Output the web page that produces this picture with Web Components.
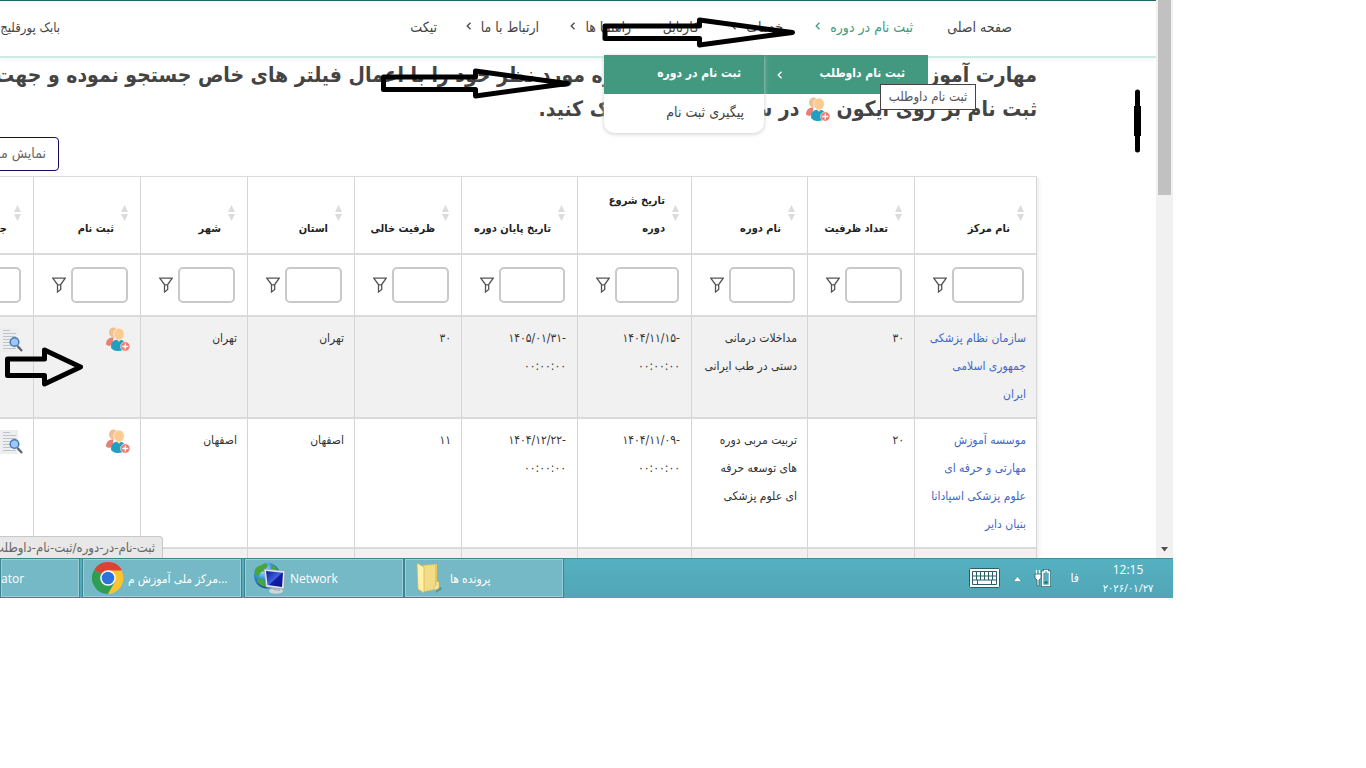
<!DOCTYPE html>
<html lang="fa">
<head>
<meta charset="utf-8">
<title>ثبت نام در دوره</title>
<style>
  html, body { height: 100%; margin: 0; }
  body { background: #fff; font-family: "DejaVu Sans Condensed", "DejaVu Sans", sans-serif; }
</style>
</head>
<body>
<desk-screen>
  <site-page slot="page"></site-page>
  <scroll-track slot="scroll"></scroll-track>
  <status-bubble slot="over">ثبت-نام-در-دوره/ثبت-نام-داوطلب</status-bubble>
  <task-bar slot="bar"></task-bar>
  <pen-marks slot="over"></pen-marks>
</desk-screen>
<script>
const define = (name, html, setup) => customElements.define(name, class extends HTMLElement {
  constructor() {
    super();
    const t = document.createElement('template');
    t.innerHTML = html;
    this.attachShadow({ mode: 'open' }).append(t.content.cloneNode(true));
    if (setup) setup(this);
  }
});

/* ---------- icons ---------- */
define('people-icon', `
<style>:host{display:inline-block;width:24px;height:25px}svg{display:block;width:100%;height:100%}</style>
<svg viewBox="0 0 24 25" aria-hidden="true">
  <ellipse cx="7.5" cy="5.500" rx="4.500" ry="5" fill="#f0bf94"/>
  <path d="M0 16.500C.5 12 4 10 7.500 10.500l-1 7-3 1.500C1 18.500 0 18 0 16.500z" fill="#e87f74"/>
  <path d="M5 20c0-5 3-7.500 7.500-7.500S20 15 20 20c-2 3-5 4-8 4s-7-1.500-7-4z" fill="#229fc0"/>
  <path d="M10 11.500h6l-3 3.500z" fill="#fccb92"/>
  <ellipse cx="13" cy="7" rx="5.300" ry="6" fill="#fccb92" stroke="#fff" stroke-width=".6"/>
  <circle cx="19.300" cy="19.500" r="4.700" fill="#e9796f" stroke="#fff" stroke-width=".6"/>
  <path d="M19.300 16.500v6M16.300 19.500h6" stroke="#fff" stroke-width="1.300"/>
</svg>`);

define('detail-icon', `
<style>:host{display:inline-block;width:24px;height:26px}svg{display:block;width:100%;height:100%}</style>
<svg viewBox="0 0 24 26" aria-hidden="true">
  <path d="M0 1h19v24H0z" fill="#eceef0"/>
  <path d="M4 3.500h7M4 6.500h13M4 9.500h13M4 12.500h9M4 15.500h7M4 18.500h8M4 21.500h13" stroke="#bfc4c9"/>
  <path d="M18.500 19l4.500 5" stroke="#59616b" stroke-width="2.200"/>
  <circle cx="15.500" cy="15" r="4.300" fill="#9cc8fb" stroke="#4a78b0" stroke-width="1.500"/>
</svg>`);

define('funnel-icon', `
<style>:host{display:block;width:14px;height:16px}svg{display:block}</style>
<svg width="14" height="16" viewBox="0 0 14 16" fill="none" stroke="#555" stroke-width="1.300" aria-hidden="true">
  <path d="M.8 1.200h12.400L8.700 7.500v5L5.500 15V7.500zM5.500 7.800h3.200"/>
</svg>`);

define('sort-mark', `
<style>:host{display:block;width:7px;height:16px}svg{display:block}</style>
<svg width="7" height="16" viewBox="0 0 7 16" fill="#dcdcdc" aria-hidden="true"><path d="M3.500 0L7 7H0zM0 9h7l-3.500 7z"/></svg>`);

define('chevron-mark', `
<style>:host{display:inline-block;width:6px;height:8px}svg{display:block}</style>
<svg width="6" height="8" viewBox="0 0 6 8" fill="none" stroke="currentColor" stroke-width="1.300" aria-hidden="true"><path d="M4.500 .8L1.200 4l3.300 3.200"/></svg>`);

/* ---------- navigation ---------- */
define('nav-item', `
<style>
  :host{display:block;font-size:14px;line-height:24px;color:#444}
  :host([active]){color:#3f9a7e}
  a{color:inherit;text-decoration:none;display:inline-flex;gap:9px;white-space:nowrap}
  chevron-mark{display:none;margin-top:7px}
  :host([more]) chevron-mark{display:block}
</style>
<a href="#"><slot></slot><chevron-mark></chevron-mark></a>`);

define('site-nav', `
<style>
  :host{display:block;position:relative;z-index:2;border-top:1px solid #1c6864;border-bottom:2px solid #cdeae4;background:#fff;box-shadow:0 2px 4px #eef8f6}
  nav{display:grid;grid-template-columns:99px 130px 84px 68px 92px 102px 377px 200px;box-sizing:border-box;height:55px;padding:14px 144px 0 0}
  .user{font-size:13px;line-height:26px}
</style>
<nav>
  <nav-item>صفحه اصلی</nav-item>
  <nav-item more active>ثبت نام در دوره</nav-item>
  <nav-item more>خدمات</nav-item>
  <nav-item>کارتابل</nav-item>
  <nav-item more>راهنما ها</nav-item>
  <nav-item more>ارتباط با ما</nav-item>
  <nav-item>تیکت</nav-item>
  <nav-item class="user">بابک پورقلیج</nav-item>
</nav>
<slot></slot>`);

define('drop-menu', `
<style>
  :host{position:absolute;z-index:3;top:54px;right:228px;display:flex;align-items:flex-start;font-size:12px;line-height:20px}
  a{display:flex;box-sizing:border-box;height:39px;padding-top:8px;text-decoration:none;white-space:nowrap}
  .top{width:164px;padding-right:23px;background:#43997f;color:#fff;font-weight:bold}
  .top chevron-mark{margin:8px auto 0 13px}
  .panel{width:160px;border-radius:0 0 10px 10px;background:#fff;box-shadow:0 1px 4px #ccc}
  .on{padding-right:23px;background:#43997f;color:#fff;font-weight:bold}
  .off{padding-right:20px;color:#444;font-size:14px}
  .tip{position:absolute;top:29px;right:-48px;box-sizing:border-box;width:96px;height:26px;border:1px solid #444;background:#fff;color:#555;font-size:13px;line-height:24px;text-align:center;white-space:nowrap}
</style>
<a class="top" href="#">ثبت نام داوطلب<chevron-mark></chevron-mark></a>
<div class="panel"><a class="on" href="#">ثبت نام در دوره</a><a class="off" href="#">پیگیری ثبت نام</a></div>
<div class="tip" role="tooltip">ثبت نام داوطلب</div>`);

/* ---------- course table ---------- */
define('filter-box', `
<style>
  :host{display:flex;align-items:center;gap:5px;padding:12px 12px 12px 18px}
  input{flex:1;min-width:0;box-sizing:border-box;height:36px;padding:0 6px;border:2px solid #c9c9c9;border-radius:5px;background:#fff;font:inherit}
</style>
<input type="text"><funnel-icon></funnel-icon>`, host => {
  host.shadowRoot.querySelector('input').setAttribute('aria-label', host.getAttribute('label') || 'فیلتر');
});

define('course-table', `
<style>
  :host{display:block;font-size:12px;line-height:28px;color:#333}
  table{table-layout:fixed;width:1111px;border-collapse:separate;border-spacing:0;border-right:1px solid #d3d5d7;box-shadow:2px 2px 4px #eee}
  th,td{box-sizing:border-box;padding:0;border-left:1px solid #d3d5d7;border-bottom:2px solid #d8dadb;text-align:right;vertical-align:top}
  .names th{border-top:1px solid #dadcdd;vertical-align:bottom;color:#222;font-size:11px;white-space:nowrap}
  .h{display:flex;align-items:flex-end;gap:7px;padding:10px 12px 10px 6px}
  .h sort-mark{margin-bottom:22px}
  tbody td{padding:7px 10px 9px 6px}
  tbody tr:nth-child(odd){background:#f1f1f1}
  tbody a{color:#4468c8;text-decoration:none}
  tbody a.pic{display:block;height:25px;margin-top:3px;line-height:0}
</style>
<table><colgroup></colgroup><thead><tr class="names"></tr><tr class="filters"></tr></thead><tbody></tbody></table>`, host => {
  const root = host.shadowRoot;
  const columns = [
    ['نام مرکز', 122], ['تعداد ظرفیت', 107], ['نام دوره', 116], ['تاریخ شروع<br>دوره', 114], ['تاریخ پایان دوره', 116],
    ['ظرفیت خالی', 107], ['استان', 107], ['شهر', 107], ['ثبت نام', 107], ['جزئیات', 107]
  ];
  const rows = [
    ['سازمان نظام پزشکی<br>جمهوری اسلامی<br>ایران', '۳۰', 'مداخلات درمانی<br>دستی در طب ایرانی', '۱۴۰۴/۱۱/۱۵-', '۱۴۰۵/۰۱/۳۱-', '۳۰', 'تهران', 'تهران'],
    ['موسسه آموزش<br>مهارتی و حرفه ای<br>علوم پزشکی اسپادانا<br>بنیان دایر', '۲۰', 'تربیت مربی دوره<br>های توسعه حرفه<br>ای علوم پزشکی', '۱۴۰۴/۱۱/۰۹-', '۱۴۰۴/۱۲/۲۲-', '۱۱', 'اصفهان', 'اصفهان']
  ];
  const cell = (v, i) => i === 0 ? `<td><a href="#">${v}</a></td>`
    : i === 3 || i === 4 ? `<td dir="ltr">${v}<br>۰۰:۰۰:۰۰</td>` : `<td>${v}</td>`;
  root.querySelector('colgroup').innerHTML = columns.map(c => `<col style="width:${c[1]}px">`).join('');
  root.querySelector('.names').innerHTML = columns.map(c => `<th scope="col"><div class="h"><sort-mark></sort-mark><span>${c[0]}</span></div></th>`).join('');
  root.querySelector('.filters').innerHTML = columns.map(c => `<td><filter-box label="${c[0].replace('<br>', ' ')}"></filter-box></td>`).join('');
  root.querySelector('tbody').innerHTML = rows.map(r => '<tr>' + r.map(cell).join('')
    + '<td><a class="pic" href="#" aria-label="ثبت نام"><people-icon></people-icon></a></td>'
    + '<td><a class="pic" href="#" aria-label="جزئیات"><detail-icon></detail-icon></a></td></tr>').join('')
    + '<tr>' + '<td>&nbsp;</td>'.repeat(10) + '</tr>';
});

define('site-page', `
<style>
  :host{display:block;direction:rtl}
  main{display:block;padding-right:119px}
  h1{margin:0;font-size:21px;line-height:34px;font-weight:bold;color:#444;white-space:nowrap}
  h1 .line{display:block}
  h1 people-icon{vertical-align:-6px}
  .lead{display:inline-block;width:402px}
  button{display:block;box-sizing:border-box;width:140px;height:34px;margin:11px 978px 5px 0;padding:0 12px 2px;border:1px solid #1b0a63;border-radius:4px;background:#fff;color:#666;font:inherit;font-size:14px;text-align:right;white-space:nowrap}
</style>
<site-nav><drop-menu></drop-menu></site-nav>
<main>
  <h1><span class="line"><span class="lead">مهارت آموز محترم می توانید</span>دوره مورد نظر خود را با اعمال فیلتر های خاص جستجو نموده و جهت</span>
  <span class="line">ثبت نام بر روی آیکون <people-icon></people-icon> در ستون ثبت نام کلیک کنید.</span></h1>
  <button type="button">نمایش موارد</button>
  <course-table></course-table>
</main>`);

define('scroll-track', `
<style>
  :host{display:flex;flex-direction:column;justify-content:space-between;align-items:center;width:17px;height:100%;background:#f1f1f1}
  .thumb{width:13px;height:35%;background:#c1c1c1}
  svg{margin-bottom:6px}
</style>
<div class="thumb"></div>
<svg width="7" height="5" viewBox="0 0 7 5" fill="#505050" aria-hidden="true"><path d="M0 0h7L3.500 4.500z"/></svg>`);

define('status-bubble', `
<style>
  :host{position:absolute;left:0;bottom:40px;z-index:4;display:flex;direction:rtl;box-sizing:border-box;width:163px;height:22px;padding-right:7px;overflow:hidden;border:1px solid #c8c8c8;border-width:1px 1px 0 0;border-radius:0 4px 0 0;background:#e8e8e8;color:#666;font-size:13px;line-height:21px;white-space:nowrap}
</style><slot></slot>`);

/* ---------- taskbar ---------- */
define('task-button', `
<style>
  :host{display:block;width:160px;box-sizing:border-box}
  button{display:flex;align-items:center;gap:4px;width:100%;height:40px;padding:0 9px;border:1px solid #3d8491;box-shadow:inset 0 0 0 1px #9bd0d9;background:#74b9c5;color:#fff;font:12px "Open Sans","DejaVu Sans Condensed","DejaVu Sans",sans-serif;white-space:nowrap}
  :host(.first) button{padding:0}
</style>
<button type="button"><slot name="icon"></slot><slot></slot></button>`);

define('task-bar', `
<style>
  :host{display:flex;align-items:stretch;height:40px;overflow:hidden;background:linear-gradient(#55b1c1,#50a6b6);box-shadow:inset 0 1px #418d98;color:#fff;font:12px/18px "Open Sans","DejaVu Sans Condensed","DejaVu Sans",sans-serif}
  .first{width:80px;margin-right:2px}
  .chrome{margin-right:2px}
  .tray{display:flex;align-items:center;margin-left:auto;padding-right:18px}
  .time{display:flex;flex-direction:column;align-items:center;width:54px;margin-left:22px;padding-top:2px;white-space:nowrap}
  .cal{direction:rtl;font-size:11px}
  .up{margin:0 12px 0 13px}
  .lang{margin-left:20px}
</style>
<task-button class="first">ator</task-button>
<task-button class="chrome"><svg slot="icon" width="32" height="32" viewBox="0 0 32 32">
  <path d="M16 16L2.140 8A16 16 0 0 1 29.860 8z" fill="#dd4131"/>
  <path d="M16 16L2.140 8A16 16 0 0 0 16 32z" fill="#2f9e52"/>
  <path d="M22.900 20L16 32 12 26l4-10z" fill="#2f9e52"/>
  <path d="M16 8.500h13.600A16 16 0 0 1 16 32l7-12z" fill="#fbc32d"/>
  <circle cx="16" cy="16" r="7.800" fill="#fff"/><circle cx="16" cy="16" r="6.300" fill="#2c72dc"/>
</svg><span dir="ltr">مرکز ملی آموزش م...</span></task-button>
<task-button><svg slot="icon" width="32" height="32" viewBox="0 0 32 32">
  <defs><radialGradient id="g" cx=".35" cy=".25" r=".8"><stop offset="0" stop-color="#b9ecff"/><stop offset=".5" stop-color="#2f8ed8"/><stop offset="1" stop-color="#123f91"/></radialGradient>
  <linearGradient id="s" x2="1" y2="1"><stop offset="0" stop-color="#0a1a9c"/><stop offset=".5" stop-color="#4263dc"/><stop offset=".55" stop-color="#101fa8"/><stop offset="1" stop-color="#0a138b"/></linearGradient></defs>
  <circle cx="13" cy="13.500" r="13" fill="url(#g)"/>
  <path d="M3 5l8-4 3 2-3 6-4 1-3 5-3-2C0 9 1 7 3 5zM17 2l6 4-2 4-4-3zM4 16l6 2 2 7-4-1-5-4z" fill="#49a53b"/>
  <ellipse cx="22" cy="29" rx="7" ry="2.800" fill="#d3d6d9"/><path d="M19 22l7 1v6l-7-1z" fill="#aeb4ba"/>
  <path d="M10 7l21 2-1 18-18-2z" fill="#e3e8ee" stroke="#8d99a8" stroke-width=".6"/><path d="M12 9l17 1.700-1 14.300-14.500-2z" fill="url(#s)"/>
</svg>Network</task-button>
<task-button><svg slot="icon" width="32" height="32" viewBox="0 0 32 32">
  <path d="M22 28l5-3 1 2-6 4z" fill="#3c7480" opacity=".5"/>
  <path d="M9 3l14-1v25l-14 3z" fill="#e9c75e"/><path d="M10 4l11-1v24l-11 2z" fill="#f3dc88"/>
  <path d="M3 1l7 4v26l-6-4z" fill="#fff0aa" stroke="#d5b24e" stroke-width=".7"/><path d="M22 19l3 1v6l-3 2-2-1v-3l2-1z" fill="#f7e59b" stroke="#cfae50" stroke-width=".6"/>
</svg><span>پرونده ها</span></task-button>
<div class="tray">
  <svg width="31" height="20" viewBox="0 0 31 20"><rect x=".5" y=".5" width="30" height="19" rx="1" fill="#fff" stroke="#2c5e68"/><path d="M3.500 3.500h24v13h-24zM3.500 8h24M3.500 12h24M7.500 3.500V12M11.500 3.500V12M15.500 3.500V12M19.500 3.500V12M23.500 3.500V12M8.500 12v4M22.500 12v4" fill="none" stroke="#2c5e68"/></svg>
  <svg class="up" width="9" height="7" viewBox="0 0 9 7"><path d="M.5 6.500h8L4.500 1.500z" fill="#fff" stroke="#3f7a85" stroke-width=".5"/></svg>
  <svg width="17" height="18" viewBox="0 0 17 18"><path d="M8.500 3h2V1h3v2h2v13.500h-7z" fill="#54aebd" stroke="#2c5e68" stroke-width="3"/><path d="M8.500 3h2V1.500h3V3h2v13.500h-7z" fill="#54aebd" stroke="#fff" stroke-width="1.500"/><path d="M10.500 13.500h3" stroke="#2c5e68" stroke-width="2"/><path d="M2.500 1v4M5.500 1v4" stroke="#fff" stroke-width="1.300"/><path d="M1 5h6v4L5 11v6H3v-6L1 9z" fill="#fff" stroke="#2c5e68" stroke-width=".8"/></svg>
  <span class="lang">فا</span>
  <div class="time"><span>12:15</span><span class="cal">۲۰۲۶/۰۱/۲۷</span></div>
</div>`);

/* ---------- freehand annotations ---------- */
define('pen-marks', `
<style>:host{position:absolute;inset:0;z-index:5;pointer-events:none}svg{position:absolute;top:0;right:0}</style>
<svg width="1173" height="598" viewBox="0 0 1173 598" fill="none" stroke="#000" stroke-width="5" stroke-linejoin="round" aria-hidden="true">
  <path d="M605 26H699.500V20L792.500 32.500 699.500 45V38.500H605z"/>
  <path d="M383.500 77H475.500V71L567.500 83.500 475.500 96V89.500H383.500z"/>
  <path d="M7.500 359H44.500V350L80.500 367 44.500 384V375.500H7.500z"/>
  <path d="M1137.500 92v58" stroke-linecap="round"/><path d="M1137.500 106v30" stroke-width="7"/>
</svg>`);

/* ---------- desktop frame ---------- */
define('desk-screen', `
<style>
  :host{display:block;box-sizing:border-box;height:100vh;padding:0 193px 170px 0}
  .screen{position:relative;display:flex;flex-direction:column;height:100%;overflow:hidden}
  .view{flex:1;min-height:0;display:grid;grid-template-columns:minmax(0,1fr) 17px;overflow:hidden}
  .page{min-height:0;overflow:hidden}
</style>
<div class="screen">
  <div class="view"><div class="page"><slot name="page"></slot></div><slot name="scroll"></slot></div>
  <slot name="bar"></slot>
  <slot name="over"></slot>
</div>`);
</script>
</body>
</html>
